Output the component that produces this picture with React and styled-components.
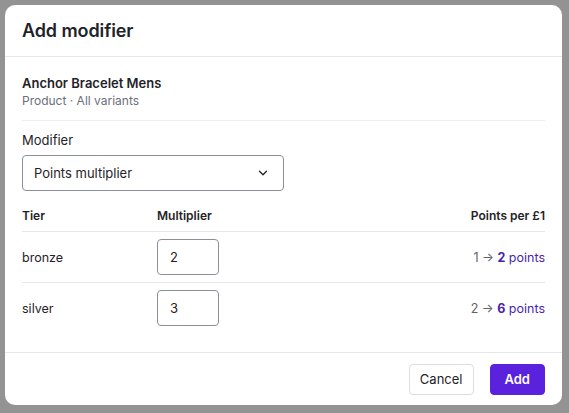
import React from "react";
import styled, { createGlobalStyle } from "styled-components";

const Global = createGlobalStyle`
  html, body {
    margin: 0;
    padding: 0;
    background: #939393;
    font-family: Inter, "Noto Sans", sans-serif;
    -webkit-font-smoothing: antialiased;
  }
`;

const Overlay = styled.div`
  width: 569px;
  height: 413px;
  background: #939393;
  display: flex;
  align-items: flex-start;
  padding: 5px 0 0 5px;
  box-sizing: border-box;
`;

const Modal = styled.div`
  width: 557px;
  height: 400px;
  background: #fff;
  border-radius: 10px;
  display: flex;
  flex-direction: column;
  overflow: hidden;
  color: #1f2328;
`;

const Header = styled.div`
  height: 51px;
  flex-shrink: 0;
  display: flex;
  align-items: center;
  padding: 0 17px;
  border-bottom: 1px solid #e6e7ea;
`;

const Title = styled.h2`
  margin: 0;
  font-size: 18px;
  font-weight: 600;
  letter-spacing: -0.1px;
`;

const Body = styled.div`
  flex: 1;
  padding: 17px 17px 0;
`;

const Product = styled.div`
  padding-bottom: 10px;
  border-bottom: 1px solid #eceef0;
`;

const ProductName = styled.div`
  font-size: 13px;
  font-weight: 600;
  line-height: 18px;
`;

const ProductMeta = styled.div`
  font-size: 12px;
  color: #6b7079;
  line-height: 18px;
`;

const Label = styled.div`
  font-size: 13px;
  margin: 10px 0 6px;
  line-height: 18px;
`;

const Select = styled.div`
  width: 262px;
  height: 36px;
  box-sizing: border-box;
  border: 1px solid #8a8f98;
  border-radius: 4px;
  display: flex;
  align-items: center;
  justify-content: space-between;
  padding: 0 13px 0 11px;
  font-size: 13px;
`;

const Table = styled.div`
  margin-top: 15px;
`;

const Row = styled.div`
  display: grid;
  grid-template-columns: 135px 1fr auto;
  align-items: center;
  height: ${(p) => (p.$head ? "18px" : "50px")};
  padding-bottom: ${(p) => (p.$head ? "7px" : "0")};
  border-bottom: ${(p) => (p.$last ? "none" : "1px solid #e6e7ea")};
  font-size: ${(p) => (p.$head ? "12px" : "12.5px")};
  font-weight: ${(p) => (p.$head ? 600 : 400)};
`;

const Input = styled.div`
  width: 62px;
  height: 36px;
  box-sizing: border-box;
  border: 1px solid #8a8f98;
  border-radius: 4px;
  display: flex;
  align-items: center;
  padding-left: 12px;
  font-size: 13px;
`;

const Points = styled.div`
  color: #5f636b;
  text-align: right;
  b {
    color: #4a1fb0;
    font-weight: 700;
  }
  span {
    color: #4a1fb0;
  }
`;

const Footer = styled.div`
  height: 53px;
  box-sizing: border-box;
  border-top: 1px solid #e6e7ea;
  display: flex;
  justify-content: flex-end;
  align-items: center;
  gap: 16px;
  padding: 0 17px;
`;

const Button = styled.button`
  height: 31px;
  padding: 0 ${(p) => (p.$primary ? "14px" : "10px")};
  border-radius: 4px;
  font-family: inherit;
  font-size: 13px;
  font-weight: ${(p) => (p.$primary ? 600 : 400)};
  border: 1px solid ${(p) => (p.$primary ? "#5a22dc" : "#dadde2")};
  background: ${(p) => (p.$primary ? "#5a22dc" : "#fff")};
  color: ${(p) => (p.$primary ? "#fff" : "#1f2328")};
`;

const tiers = [
  { name: "bronze", mult: 2, base: 1 },
  { name: "silver", mult: 3, base: 2 },
];

export default function App() {
  return (
    <>
      <Global />
      <Overlay>
        <Modal>
          <Header>
            <Title>Add modifier</Title>
          </Header>
          <Body>
            <Product>
              <ProductName>Anchor Bracelet Mens</ProductName>
              <ProductMeta>Product · All variants</ProductMeta>
            </Product>
            <Label>Modifier</Label>
            <Select>
              Points multiplier
              <svg width="14" height="14" viewBox="0 0 24 24" fill="none" stroke="#1f2328" strokeWidth="2.2" strokeLinecap="round" strokeLinejoin="round">
                <path d="m6 9 6 6 6-6" />
              </svg>
            </Select>
            <Table>
              <Row $head>
                <div>Tier</div>
                <div>Multiplier</div>
                <div>Points per £1</div>
              </Row>
              {tiers.map((t, i) => (
                <Row key={t.name} $last={i === tiers.length - 1}>
                  <div>{t.name}</div>
                  <div>
                    <Input>{t.mult}</Input>
                  </div>
                  <Points>
                    {t.base} → <b>{t.base * t.mult}</b> <span>points</span>
                  </Points>
                </Row>
              ))}
            </Table>
          </Body>
          <Footer>
            <Button>Cancel</Button>
            <Button $primary>Add</Button>
          </Footer>
        </Modal>
      </Overlay>
    </>
  );
}
